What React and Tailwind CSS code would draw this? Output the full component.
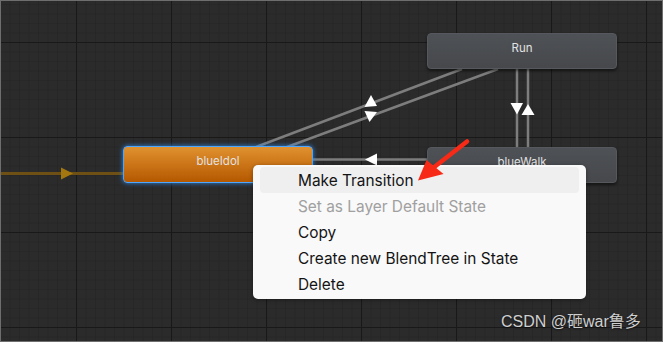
import React from "react";

const menuItems = [
  { label: "Make Transition", active: true },
  { label: "Set as Layer Default State", disabled: true },
  { label: "Copy" },
  { label: "Create new BlendTree in State" },
  { label: "Delete" },
];

const GraphLines = () => (
  <svg className="absolute inset-0" width="663" height="342">
    <defs>
      <pattern id="minor" width="9.5" height="9.5" patternUnits="userSpaceOnUse" y="4">
        <path d="M0 0V9.5M0 0H9.5" stroke="#232323" strokeWidth="1" fill="none" />
      </pattern>
      <pattern id="major" width="95" height="95" patternUnits="userSpaceOnUse" x="76" y="42">
        <path d="M0.5 0V95M0 0.5H95" stroke="#191919" strokeWidth="1.2" fill="none" />
      </pattern>
    </defs>
    <rect width="663" height="342" fill="#2b2b2b" />
    <rect width="663" height="342" fill="url(#minor)" />
    <rect width="663" height="342" fill="url(#major)" />

    {/* entry */}
    <line x1="0" y1="173.5" x2="124" y2="173.5" stroke="#6e5014" strokeWidth="3" />
    <polygon points="61,167.5 73,173.5 61,179.5" fill="#a3760f" />

    {/* Run <-> blueIdol */}
    <line x1="256" y1="147" x2="462" y2="69" stroke="#7d7d7d" strokeWidth="2.5" />
    <line x1="287" y1="147" x2="498" y2="69" stroke="#7d7d7d" strokeWidth="2.5" />
    <polygon points="371,95 364.5,107 377,106" fill="#ffffff" />
    <polygon points="364.5,111 377,112 369.5,122" fill="#ffffff" />

    {/* Run <-> blueWalk */}
    <line x1="517" y1="69" x2="517" y2="148" stroke="#7d7d7d" strokeWidth="2.5" />
    <line x1="528" y1="69" x2="528" y2="148" stroke="#7d7d7d" strokeWidth="2.5" />
    <polygon points="510.5,103 523,103 517,114.5" fill="#ffffff" />
    <polygon points="528,104 534.5,115 521.5,115" fill="#ffffff" />

    {/* blueWalk -> blueIdol */}
    <line x1="313" y1="159.5" x2="428" y2="159.5" stroke="#7d7d7d" strokeWidth="2.5" />
    <polygon points="365,159.5 377,153.5 377,165.5" fill="#ffffff" />
  </svg>
);

const StateNode = ({ label, className }) => (
  <div className={`absolute w-[190px] h-[36px] rounded-[4px] pt-[7px] text-center text-[11.5px] leading-[14px] text-[#e2e2e2] ${className}`}
    style={{ fontFamily: "Inter, 'Noto Sans', sans-serif" }}>
    {label}
  </div>
);

const RedArrow = () => (
  <svg className="absolute inset-0 pointer-events-none" width="663" height="342">
    <line x1="467" y1="141.5" x2="433" y2="168" stroke="#f72a17" strokeWidth="4.5" strokeLinecap="round" />
    <polygon points="418,180.5 426.5,160 443.5,174" fill="#f72a17" />
  </svg>
);

export default function App() {
  return (
    <div className="relative w-[663px] h-[342px] overflow-hidden bg-[#2b2b2b]">
      <GraphLines />

      <StateNode label="Run" className="left-[427px] top-[33px] bg-[linear-gradient(#4e5155,#46484c)] border border-[#55585c] shadow-[0_2px_3px_rgba(0,0,0,0.5)]" />
      <StateNode label="blueWalk" className="left-[427px] top-[147px] bg-[linear-gradient(#4e5155,#46484c)] border border-[#55585c] shadow-[0_2px_3px_rgba(0,0,0,0.5)]" />
      <StateNode label="blueIdol" className="left-[123px] top-[146px] h-[37px] bg-[linear-gradient(#e0912f,#b55800)] border-[1.5px] border-[#4ea6ff] shadow-[0_0_5px_#2f86e0]" />

      <div className="absolute left-[253px] top-[165px] w-[333px] h-[134px] rounded-[5px] bg-[#f9f9f9] px-[7px] pt-[2px] flex flex-col shadow-[0_1px_4px_rgba(0,0,0,0.35)]"
        style={{ fontFamily: "Inter, 'Noto Sans', sans-serif" }}>
        {menuItems.map((item, index) => (
          <div key={index}
            className={`h-[26px] pl-[38px] pt-[1px] flex items-center rounded-[4px] text-[15.4px] ${item.active ? "bg-[#efefef]" : ""} ${item.disabled ? "text-[#a0a0a0]" : "text-[#141414]"}`}>
            {item.label}
          </div>
        ))}
      </div>

      <RedArrow />

      <div className="absolute left-[501px] top-[312px] text-[16px] leading-[20px] text-[#cfcfcf] [text-shadow:0_1px_2px_rgba(0,0,0,0.6)]"
        style={{ fontFamily: "'Liberation Sans', 'Noto Sans CJK SC', sans-serif" }}>
        CSDN @砸war鲁多
      </div>

      <div className="absolute inset-0 border border-[#6e6e6e] pointer-events-none" />
    </div>
  );
}
